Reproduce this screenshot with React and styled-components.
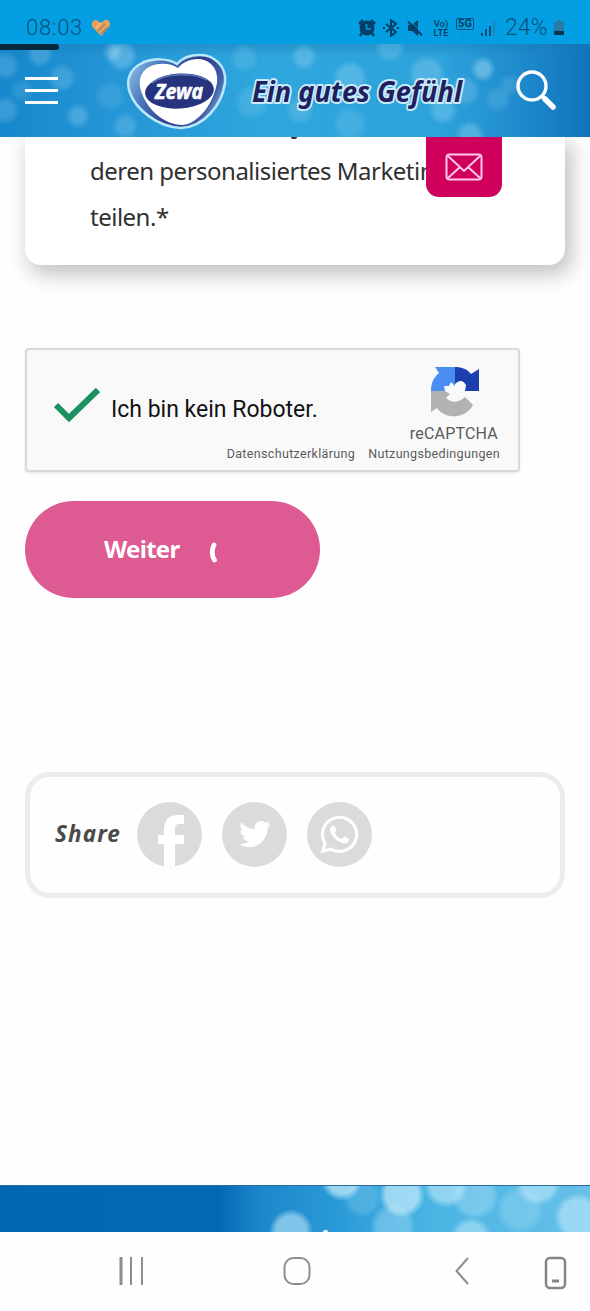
import styled, { createGlobalStyle } from 'styled-components'
import { FaTwitter, FaWhatsapp } from 'react-icons/fa'

const GlobalStyle = createGlobalStyle`
  * {
    box-sizing: border-box;
  }

  body {
    margin: 0;
    background: #fefefe;
    font-family: 'Noto Sans', 'Open Sans', sans-serif;
  }
`

// [x, y, radius, opacity]
const headerDots = [
  [5, 22, 13, 0.2], [40, 10, 12, 0.22], [62, 34, 13, 0.2], [22, 46, 11, 0.12],
  [78, 72, 11, 0.25], [122, 12, 14, 0.3], [113, 8, 9, 0.3], [125, 82, 12, 0.2],
  [5, 66, 13, 0.2], [110, 52, 14, 0.12], [244, 14, 13, 0.15], [304, 13, 12, 0.25],
  [252, 58, 16, 0.15], [350, 34, 16, 0.25], [390, 3, 14, 0.2], [427, 30, 17, 0.25],
  [483, 25, 11, 0.4], [465, 47, 14, 0.2], [443, 66, 13, 0.25], [498, 55, 12, 0.15],
  [510, 41, 10, 0.15], [470, 91, 13, 0.28], [350, 80, 16, 0.15], [300, 66, 13, 0.18],
]

const footerDots = [
  [291, 45, 20, 0.6], [342, -6, 19, 0.75], [402, 9, 21, 0.75], [446, 0, 20, 0.6],
  [471, 52, 19, 0.55], [538, -3, 21, 0.6], [578, 31, 22, 0.6], [393, 40, 21, 0.35],
  [475, 10, 22, 0.35], [362, 12, 18, 0.2], [520, 24, 22, 0.25],
]

const bokeh = (dots) =>
  dots
    .map(([x, y, r, a]) => `radial-gradient(circle at ${x}px ${y}px, rgba(190, 232, 250, ${a}) ${r - 5}px, rgba(190, 232, 250, 0) ${r + 2}px)`)
    .join(',')

const Screen = styled.div`
  width: 590px;
  height: 1311px;
  overflow: hidden;
  display: flex;
  flex-direction: column;
`

const StatusBar = styled.div`
  height: 44px;
  flex: none;
  display: flex;
  align-items: center;
  padding: 11px 25px 0 26px;
  background: #049fe3;
  color: #07507c;
  font-family: Roboto, sans-serif;
`

const Time = styled.span`
  font-size: 22px;
  font-weight: 300;
  letter-spacing: 0.7px;
  width: 65px;
`

const StatusIcons = styled.div`
  margin-left: auto;
  display: flex;
  align-items: center;
  color: #053f65;

  svg {
    flex: none;
  }
`

const Glyph = styled.svg`
  width: 18px;
  height: 18px;
  margin-right: 6px;
`

const Stacked = styled.div`
  width: 18px;
  margin-left: 2px;
  font-size: 9.5px;
  line-height: 9px;
  font-weight: 500;
  text-align: center;
  white-space: nowrap;
`

const FiveG = styled.div`
  width: 18px;
  height: 20px;
  margin-left: 6px;
  font-size: 7px;
  line-height: 8px;
  text-align: center;
  color: #2077a6;

  b {
    display: block;
    height: 12px;
    border: 1px solid #07507c;
    border-radius: 2px;
    color: #053f65;
    font-size: 11px;
    line-height: 10px;
  }
`

const Percent = styled.span`
  margin-left: 9px;
  width: 48px;
  color: #07507c;
  font-size: 23px;
  font-weight: 300;
`

const Header = styled.header`
  height: 93px;
  flex: none;
  position: relative;
  display: flex;
  align-items: center;
  padding: 0 34px 0 25px;
  background: ${bokeh(headerDots)}, linear-gradient(180deg, rgba(20, 120, 180, 0.4), transparent 12px),
    linear-gradient(90deg, #1687cc 0, #2596d6 20%, #2fa6dd 45%, #2da2db 75%, #1a83c8 92%, #1273bb 100%);
`

const Progress = styled.div`
  position: absolute;
  left: 0;
  top: 0;
  width: 59px;
  height: 6px;
  border-radius: 0 3px 3px 0;
  background: #06293f;
`

const Burger = styled.button`
  width: 33px;
  height: 27px;
  padding: 0;
  border: 0;
  background: none;
  display: flex;
  flex-direction: column;
  justify-content: space-between;

  span {
    height: 3px;
    width: 33px;
    background: #fff;
  }
`

const Logo = styled.svg`
  margin-left: 67px;
  flex: none;
`

const Slogan = styled.svg`
  margin-left: 11px;
  flex: none;
`

const SearchIcon = styled.svg`
  margin-left: auto;
  flex: none;
`

const Content = styled.main`
  height: 1048px;
  flex: none;
  overflow: hidden;
  padding: 0 25px;
`

const Card = styled.section`
  position: relative;
  height: 128px;
  padding: 11px 65px;
  border-radius: 0 0 16px 16px;
  background: #fff;
  box-shadow: 5px 8px 20px 2px rgba(0, 0, 0, 0.23);
  color: #303030;

  p {
    margin: 0;
    font-size: 24px;
    line-height: 46px;
    letter-spacing: -0.5px;
    white-space: nowrap;
  }
`

const Descender = styled.i`
  position: absolute;
  left: 266px;
  top: 0;
  width: 6px;
  height: 2px;
  border-radius: 0 0 3px 3px;
  background: #303030;
`

const MailTab = styled.div`
  position: absolute;
  left: 401px;
  top: 0;
  width: 76px;
  height: 60px;
  display: flex;
  justify-content: center;
  padding-top: 16px;
  border-radius: 0 0 13px 13px;
  background: #cf005c;
`

const Captcha = styled.div`
  width: 495px;
  height: 124px;
  margin-top: 83px;
  padding-left: 27px;
  display: flex;
  border: 2px solid #dadada;
  border-radius: 4px;
  background: #f9f9f9;
  box-shadow: 0 1px 3px rgba(0, 0, 0, 0.1);
  font-family: Roboto, sans-serif;
`

const CheckLabel = styled.div`
  width: 173px;
  height: 119px;
  flex: none;
  display: flex;
  align-items: center;
  white-space: nowrap;
  color: #111;
  font-size: 23px;

  svg {
    flex: none;
    margin: -10px 11px 0 0;
  }
`

const CaptchaBrand = styled.div`
  width: 273px;
  display: flex;
  flex-direction: column;
  align-items: flex-end;
  padding-top: 16px;
  color: #5b5b5b;

  svg {
    margin-right: 20px;
  }

  strong {
    margin: 8px 2px 0 0;
    font-size: 16px;
    line-height: 18px;
    font-weight: 400;
    letter-spacing: 0.2px;
  }
`

const Terms = styled.div`
  display: flex;
  gap: 13px;
  margin-top: 3px;
  font-size: 12.5px;
  line-height: 15px;
  letter-spacing: 0.34px;
  white-space: nowrap;
`

const NextButton = styled.button`
  width: 295px;
  height: 97px;
  margin-top: 29px;
  padding: 0 0 2px 79px;
  display: flex;
  align-items: center;
  gap: 28px;
  border: 0;
  border-radius: 49px;
  background: #dd5a92;
  color: #fff;
  font-family: inherit;
  font-size: 24px;
  font-weight: 700;
  letter-spacing: -0.7px;

  svg {
    margin-top: 6px;
  }
`

const Share = styled.section`
  height: 126px;
  margin-top: 174px;
  padding: 0 0 2px 25px;
  display: flex;
  align-items: center;
  border: 5px solid #ececec;
  border-radius: 25px;

  h4 {
    margin: -2px 0 0;
    width: 82px;
    color: #4a4a4a;
    font-size: 22.5px;
    font-style: italic;
    font-weight: 700;
    letter-spacing: 1.1px;
  }
`

const Social = styled.a`
  width: 65px;
  height: 65px;
  margin-right: 20px;
  display: flex;
  align-items: center;
  justify-content: center;
  border-radius: 50%;
  overflow: hidden;
  background: #dbdbdb;
  color: #fff;
`

const Footer = styled.footer`
  height: 47px;
  flex: none;
  border-top: 1px solid #2b6c9a;
  background: ${bokeh(footerDots)},
    linear-gradient(90deg, #0366b3 0, #0468b5 37%, #1c87cb 44%, #2b9bd7 58%, #48b4e3 72%, #67c0e8 100%);
`

const FooterMark = styled.i`
  display: block;
  width: 5px;
  height: 2px;
  margin: 44px 0 0 323px;
  border-radius: 2px 2px 0 0;
  background: #e8faff;
`

const NavBar = styled.nav`
  height: 79px;
  flex: none;
  display: flex;
  align-items: flex-start;
  padding-top: 24px;
`

const NavKey = styled.svg`
  flex: none;
  margin-left: ${(p) => p.$gap}px;
`

const Heart = () => (
  <svg width="20" height="18" viewBox="0 0 20 18">
    <path d="M10 17 L1.5 8 C-1 4 3 -1 7 2 L10 4 L13 1.5 C17 -1 21 4 18 8 Z" fill="#e6a15b" />
    <path d="M7 12 L14 5 M10 15 L17 8" stroke="#a78365" strokeWidth="1.4" />
    <path d="M5 9 L10 4" stroke="#f9c46b" strokeWidth="1.6" />
  </svg>
)

const ZewaLogo = () => (
  <Logo width="104" height="80" viewBox="125 50 104 80">
    <defs>
      <linearGradient id="rim" x1="0" y1="0.2" x2="1" y2="0.6">
        <stop offset="0" stopColor="#8dbce6" />
        <stop offset="0.25" stopColor="#4b79bd" />
        <stop offset="0.6" stopColor="#2b3c8b" />
        <stop offset="0.88" stopColor="#4160a8" />
        <stop offset="1" stopColor="#79b2e0" />
      </linearGradient>
    </defs>
    <path
      d="M177 63 C168 57 153 57 142 62 C128 69 126 81 130 92 C136 108 157 126 181 127 C204 126 222 104 225 82 C227 65 214 54 200 54 C190 54 182 57 177 63Z"
      fill="url(#rim)"
      stroke="#b9e9fb"
      strokeWidth="2.5"
    />
    <path
      d="M178 67 C171 62 158 61 149 66 C140 71 138 80 141 90 C146 106 162 124 183 124 C199 122 213 103 217 82 C219 67 209 58 198 58 C189 58 182 62 178 67Z"
      fill="#fff"
    />
    <ellipse cx="179.5" cy="90" rx="34.5" ry="17.5" transform="rotate(-4 180 90)" fill="#26347f" />
    <path d="M152 82 C164 72 194 71 207 79" fill="none" stroke="#5a78b8" strokeWidth="1.5" />
    <text
      x="155"
      y="98"
      textLength="48"
      lengthAdjust="spacingAndGlyphs"
      fontFamily="Noto Sans, sans-serif"
      fontSize="21"
      fontWeight="700"
      fontStyle="italic"
      fill="#fff"
      stroke="#fff"
      strokeWidth="0.5"
    >
      Zewa
    </text>
  </Logo>
)

const RecaptchaLogo = () => (
  <svg width="50" height="51" viewBox="0 0 50 51">
    <path d="M25 1 C32 1 37 3 41 8 L49 3 V25 H35 L36 19 C33 14 29 14 25 18 Z" fill="#1c3fae" />
    <path d="M25 1 V20 L21 16 L19 20 L14 20 L15 25 H1 C1 17 4 11 9 7 L5 1 Z" fill="#4a8df3" />
    <path d="M1 25 H15 L20 28 L16 32 C21 37 29 37 35 31 L43 39 C35 53 16 54 7 42 L1 46 Z" fill="#b2b2b2" />
  </svg>
)

const App = () => {
  return (
    <>
      <GlobalStyle />
      <Screen>
        <StatusBar>
          <Time>08:03</Time>
          <Heart />
          <StatusIcons>
            <Glyph viewBox="0 0 18 18">
              <path d="M1 5l4-4M17 5l-4-4M4 14l-2 3M14 14l2 3" stroke="#053f65" strokeWidth="2.5" />
              <circle cx="9" cy="9" r="7.5" fill="#053f65" />
              <path d="M8.500 5v5h4.500" fill="none" stroke="#069be0" strokeWidth="1.6" />
            </Glyph>
            <Glyph viewBox="0 0 18 18">
              <path d="M4 5l10 8-5 4V1l5 4-10 8M1 9h2M15 9h2" fill="none" stroke="#053f65" strokeWidth="2" />
            </Glyph>
            <Glyph viewBox="0 0 18 18">
              <path d="M2 6h4l6-5v16l-6-5H2z" fill="#053f65" />
              <path d="M4 1.500l14 14" stroke="#069be0" strokeWidth="1" />
              <path d="M2 2.500l14 14" stroke="#053f65" strokeWidth="2" />
            </Glyph>
            <Stacked>
              Vo)
              <br />
              LTE
            </Stacked>
            <FiveG>
              <b>5G</b>↓↑
            </FiveG>
            <svg width="22" height="16" viewBox="0 0 22 16">
              <path d="M8 16v-3M12 16v-7M16 16V6" stroke="#07507c" strokeWidth="2" />
              <path d="M20 16V1" stroke="#2583b4" strokeWidth="2" />
            </svg>
            <Percent>24%</Percent>
            <svg width="12" height="17" viewBox="0 0 12 17">
              <path d="M1 3h3V1h4v2h3v9H1z" fill="#287ca5" />
              <path d="M1 12h10v4H1z" fill="#06334f" />
            </svg>
          </StatusIcons>
        </StatusBar>

        <Header>
          <Progress />
          <Burger>
            <span />
            <span />
            <span />
          </Burger>
          <ZewaLogo />
          <Slogan width="260" height="70" viewBox="0 -10 260 70">
            <text
              x="12"
              y="36"
              textLength="210"
              lengthAdjust="spacingAndGlyphs"
              fontFamily="Noto Sans, sans-serif"
              fontSize="29"
              fontWeight="700"
              fontStyle="italic"
              fill="#20205f"
              stroke="#c9eafa"
              strokeWidth="4"
              strokeLinejoin="round"
              paintOrder="stroke"
            >
              Ein gutes Gefühl
            </text>
          </Slogan>
          <SearchIcon width="40" height="41" viewBox="0 0 40 41" fill="none" stroke="#fff">
            <circle cx="16" cy="16" r="14" strokeWidth="3.4" />
            <path d="M26 26l3 3" strokeWidth="4" />
            <path d="M29 29l8 8" strokeWidth="5.5" strokeLinecap="round" />
          </SearchIcon>
        </Header>

        <Content>
          <Card>
            <Descender />
            <p>deren personalisiertes Marketing</p>
            <p>teilen.*</p>
            <MailTab>
              <svg width="38" height="28" viewBox="0 0 38 28" fill="none" stroke="#ffc9e6" strokeWidth="2">
                <rect x="1.5" y="1.5" width="35" height="25" rx="3" />
                <path d="M3 3l16 15L35 3M3 25l12-11M35 25L23 14" />
              </svg>
            </MailTab>
          </Card>

          <Captcha>
            <CheckLabel>
              <svg width="46" height="36" viewBox="0 0 46 36">
                <path d="M2 18l13 13L44 3" fill="none" stroke="#1c9260" strokeWidth="6" />
              </svg>
              Ich bin kein Roboter.
            </CheckLabel>
            <CaptchaBrand>
              <RecaptchaLogo />
              <strong>reCAPTCHA</strong>
              <Terms>
                <span>Datenschutzerklärung</span>
                <span>Nutzungsbedingungen</span>
              </Terms>
            </CaptchaBrand>
          </Captcha>

          <NextButton>
            Weiter
            <svg width="10" height="22" viewBox="0 0 10 22">
              <path d="M6 4C3.500 9 3.500 14 6.500 19" fill="none" stroke="#fff" strokeWidth="4.8" strokeLinecap="round" />
            </svg>
          </NextButton>

          <Share>
            <h4>Share</h4>
            <Social>
              <svg width="65" height="65" viewBox="0 0 65 65">
                <path
                  d="M27 65V42h-6v-9h6v-5c0-10 5-15 14-15h6v9h-4c-4 0-5 2-5 5v6h9v9h-9v23z"
                  fill="#fff"
                />
              </svg>
            </Social>
            <Social>
              <FaTwitter size={32} />
            </Social>
            <Social>
              <FaWhatsapp size={43} />
            </Social>
          </Share>
        </Content>

        <Footer>
          <FooterMark />
        </Footer>

        <NavBar>
          <NavKey $gap={118} width="26" height="30" viewBox="0 0 26 30" stroke="#8d8d8d" strokeWidth="2">
            <path d="M3 1v28" strokeWidth="3" />
            <path d="M13 1v28M24 1v28" />
          </NavKey>
          <NavKey $gap={139} width="28" height="30" viewBox="0 0 28 30">
            <rect x="1.5" y="2" width="25" height="26" rx="9" fill="none" stroke="#8d8d8d" strokeWidth="2" />
          </NavKey>
          <NavKey $gap={144} width="14" height="30" viewBox="0 0 14 30">
            <path d="M13 2L1.500 15L13 28" fill="none" stroke="#8d8d8d" strokeWidth="2" />
          </NavKey>
          <NavKey $gap={75} width="23" height="34" viewBox="0 0 23 34" fill="none" stroke="#858585">
            <rect x="2" y="2" width="19" height="30" rx="4" strokeWidth="2.500" />
            <path d="M8 25h7" strokeWidth="3" />
          </NavKey>
        </NavBar>
      </Screen>
    </>
  )
}

export default App
